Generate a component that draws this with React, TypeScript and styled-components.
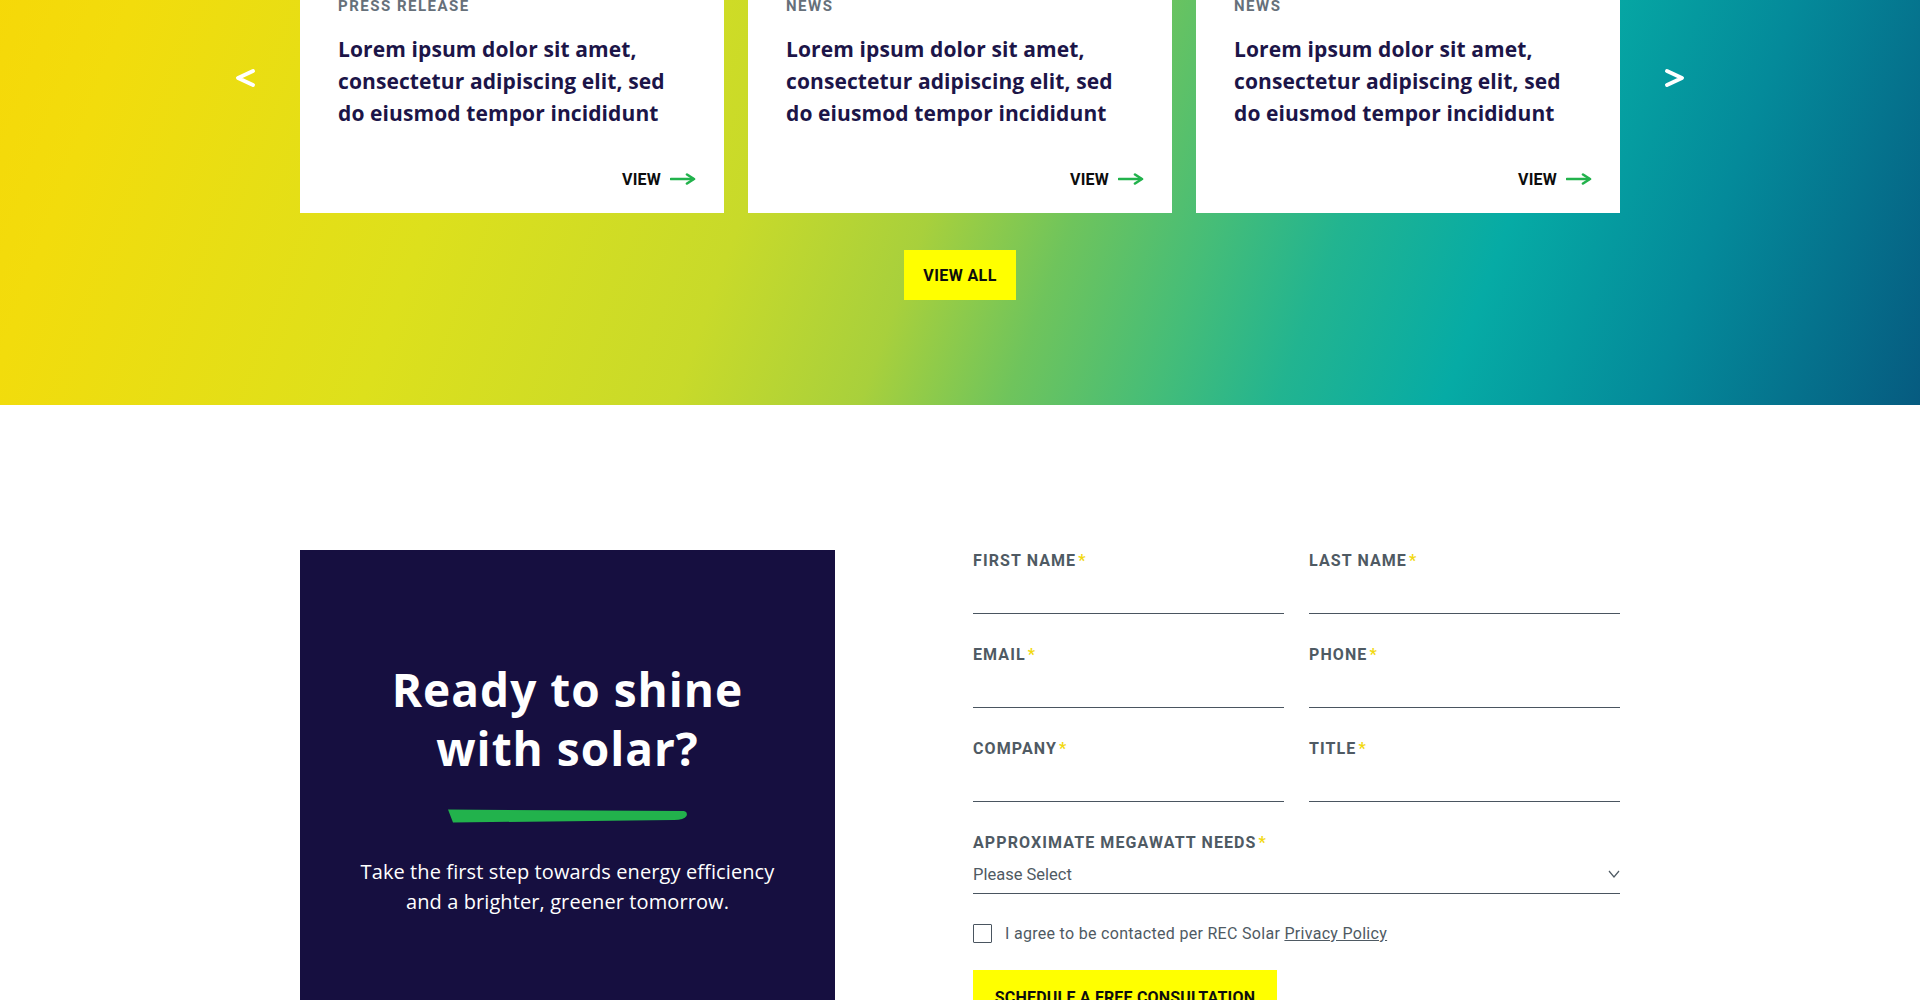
import styled, { createGlobalStyle } from "styled-components";

const GlobalStyle = createGlobalStyle`
  * {
    box-sizing: border-box;
  }

  body {
    margin: 0;
    background: #ffffff;
    font-family: Roboto, "Liberation Sans", sans-serif;
    overflow: hidden;
  }
`;

const Page = styled.div`
  width: 1920px;
  margin-top: -34px;
`;

const NewsSection = styled.section`
  background: linear-gradient(
    110deg,
    #f6d808 0%,
    #f2dc0c 7%,
    #dde01c 25%,
    #c8da2a 40%,
    #a8d03c 49%,
    #6fc45c 56%,
    #45bd78 63%,
    #22b490 69%,
    #06aba5 77%,
    #048a9a 87%,
    #065b80 100%
  );
  padding-bottom: 105px;
  display: flex;
  flex-direction: column;
  align-items: center;
`;

const Carousel = styled.div`
  display: flex;
  justify-content: center;
  gap: 44px;
`;

const ArrowButton = styled.button`
  align-self: flex-start;
  margin-top: 101px;
  width: 22px;
  height: 22px;
  padding: 0;
  border: none;
  background: none;
  cursor: pointer;
  display: flex;
  align-items: center;
  justify-content: center;
`;

const Cards = styled.div`
  display: grid;
  grid-template-columns: repeat(3, 424px);
  gap: 24px;
`;

const Card = styled.article`
  background: #ffffff;
  padding: 30px 28px 24px 38px;
  display: flex;
  flex-direction: column;
`;

const Category = styled.div`
  font-size: 15px;
  line-height: 20px;
  font-weight: 700;
  letter-spacing: 1.5px;
  text-transform: uppercase;
  color: #66707a;
`;

const CardTitle = styled.h3`
  margin: 17px 0 0;
  max-width: 348px;
  font-family: "Open Sans", Roboto, sans-serif;
  font-size: 21px;
  line-height: 32px;
  font-weight: 700;
  letter-spacing: 0.1px;
  color: #1c1548;
`;

const ViewLink = styled.a`
  margin-top: 40px;
  align-self: flex-end;
  display: flex;
  align-items: center;
  gap: 9px;
  height: 20px;
  font-size: 16px;
  font-weight: 700;
  letter-spacing: 0.2px;
  color: #0d0d0d;
  text-decoration: none;
`;

const PrimaryButton = styled.button<{ $wide?: boolean }>`
  border: none;
  background: #ffff00;
  color: #0d0d0d;
  font-family: Roboto, "Liberation Sans", sans-serif;
  font-weight: 700;
  font-size: 16px;
  letter-spacing: 0.2px;
  text-transform: uppercase;
  height: ${(p) => (p.$wide ? "54px" : "50px")};
  padding: 0 20px;
  cursor: pointer;
`;

const ViewAll = styled(PrimaryButton)`
  margin-top: 37px;
  width: 112px;
  padding: 0;
  letter-spacing: 0.4px;
`;

const ContactSection = styled.section`
  padding-top: 145px;
  display: flex;
  justify-content: center;
`;

const ContactInner = styled.div`
  width: 1320px;
  display: flex;
  gap: 138px;
`;

const PromoBox = styled.div`
  width: 535px;
  flex-shrink: 0;
  background: #160f40;
  padding: 110px 30px 110px;
  display: flex;
  flex-direction: column;
  align-items: center;
  text-align: center;
`;

const PromoTitle = styled.h2`
  margin: 0;
  font-family: "Open Sans", Roboto, sans-serif;
  font-size: 46px;
  line-height: 59px;
  font-weight: 700;
  letter-spacing: 1px;
  color: #ffffff;
`;

const Brush = styled.svg`
  margin-top: 31px;
  display: block;
`;

const PromoText = styled.p`
  margin: 34px 0 0;
  font-family: "Open Sans", Roboto, sans-serif;
  font-size: 20px;
  line-height: 30px;
  letter-spacing: 0.1px;
  color: #ffffff;
  font-weight: 400;
`;

const Form = styled.form`
  width: 647px;
  margin-top: 2px;
  display: flex;
  flex-direction: column;
`;

const FieldGrid = styled.div`
  display: grid;
  grid-template-columns: 311px 311px;
  column-gap: 25px;
  row-gap: 32px;
`;

const Field = styled.label`
  display: flex;
  flex-direction: column;
`;

const FieldLabel = styled.span`
  font-size: 16px;
  line-height: 18px;
  font-weight: 700;
  letter-spacing: 1.1px;
  text-transform: uppercase;
  color: #4f5a63;
`;

const Required = styled.span`
  color: #f2d90f;
  margin-left: 2px;
`;

const TextInput = styled.input`
  margin-top: 10px;
  height: 34px;
  border: none;
  border-bottom: 1.5px solid #4a5560;
  background: transparent;
  font-family: inherit;
  font-size: 16px;
  color: #4f5a63;
  outline: none;
`;

const SelectField = styled(Field)`
  margin-top: 32px;
`;

const SelectBox = styled.div`
  margin-top: 7px;
  height: 35px;
  border-bottom: 1.5px solid #4a5560;
  display: flex;
  align-items: center;
  justify-content: space-between;
  padding-bottom: 4px;
  font-size: 16.5px;
  color: #4f5a63;
`;

const CheckRow = styled.label`
  margin-top: 30px;
  display: flex;
  align-items: center;
  gap: 13px;
  font-size: 16px;
  color: #4f5a63;
  letter-spacing: 0.3px;
`;

const CheckBox = styled.span`
  width: 19px;
  height: 19px;
  border: 1.5px solid #4a5560;
  border-radius: 1px;
  background: #ffffff;
`;

const PolicyLink = styled.a`
  color: #4f5a63;
  text-decoration: underline;
`;

const SubmitButton = styled(PrimaryButton)`
  margin-top: 27px;
  align-self: flex-start;
  width: 304px;
`;

const Chevron = ({ dir }: { dir: "left" | "right" }) => (
  <svg width="22" height="20" viewBox="0 0 22 20">
    <polyline
      points={dir === "left" ? "19,3 4,10 19,17" : "3,3 18,10 3,17"}
      fill="none"
      stroke="#ffffff"
      strokeWidth="4"
      strokeLinecap="round"
      strokeLinejoin="round"
    />
  </svg>
);

const GreenArrow = () => (
  <svg width="26" height="12" viewBox="0 0 26 12">
    <path d="M1 6 H23" stroke="#22b24c" strokeWidth="2.6" strokeLinecap="round" />
    <path
      d="M17 1.5 L24 6 L17 10.5"
      fill="none"
      stroke="#22b24c"
      strokeWidth="2.6"
      strokeLinecap="round"
      strokeLinejoin="round"
    />
  </svg>
);

const news = [
  { category: "Press Release" },
  { category: "News" },
  { category: "News" },
];

const fields = [
  "First Name",
  "Last Name",
  "Email",
  "Phone",
  "Company",
  "Title",
];

export default function App() {
  return (
    <Page>
      <GlobalStyle />
      <NewsSection>
        <Carousel>
          <ArrowButton aria-label="Previous">
            <Chevron dir="left" />
          </ArrowButton>
          <Cards>
            {news.map((item, i) => (
              <Card key={i}>
                <Category>{item.category}</Category>
                <CardTitle>
                  Lorem ipsum dolor sit amet, consectetur adipiscing elit, sed
                  do eiusmod tempor incididunt
                </CardTitle>
                <ViewLink href="#">
                  VIEW
                  <GreenArrow />
                </ViewLink>
              </Card>
            ))}
          </Cards>
          <ArrowButton aria-label="Next">
            <Chevron dir="right" />
          </ArrowButton>
        </Carousel>
        <ViewAll>View All</ViewAll>
      </NewsSection>

      <ContactSection>
        <ContactInner>
          <PromoBox>
            <PromoTitle>
              Ready to shine
              <br />
              with solar?
            </PromoTitle>
            <Brush width="240" height="14" viewBox="0 0 240 14">
              <path
                d="M0 0.5 L236 2 Q240 3 238.5 7 Q236 11 226 11 L5 13.5 Z"
                fill="#22b24c"
              />
            </Brush>
            <PromoText>
              Take the first step towards energy efficiency
              <br />
              and a brighter, greener tomorrow.
            </PromoText>
          </PromoBox>

          <Form onSubmit={(e) => e.preventDefault()}>
            <FieldGrid>
              {fields.map((name) => (
                <Field key={name}>
                  <FieldLabel>
                    {name}
                    <Required>*</Required>
                  </FieldLabel>
                  <TextInput type="text" />
                </Field>
              ))}
            </FieldGrid>
            <SelectField>
              <FieldLabel>
                Approximate Megawatt Needs
                <Required>*</Required>
              </FieldLabel>
              <SelectBox>
                <span>Please Select</span>
                <svg width="12" height="8" viewBox="0 0 12 8">
                  <polyline
                    points="1,1 6,7 11,1"
                    fill="none"
                    stroke="#4f5a63"
                    strokeWidth="1.2"
                  />
                </svg>
              </SelectBox>
            </SelectField>
            <CheckRow>
              <CheckBox />
              <span>
                I agree to be contacted per REC Solar{" "}
                <PolicyLink href="#">Privacy Policy</PolicyLink>
              </span>
            </CheckRow>
            <SubmitButton $wide type="submit">
              Schedule a free consultation
            </SubmitButton>
          </Form>
        </ContactInner>
      </ContactSection>
    </Page>
  );
}
